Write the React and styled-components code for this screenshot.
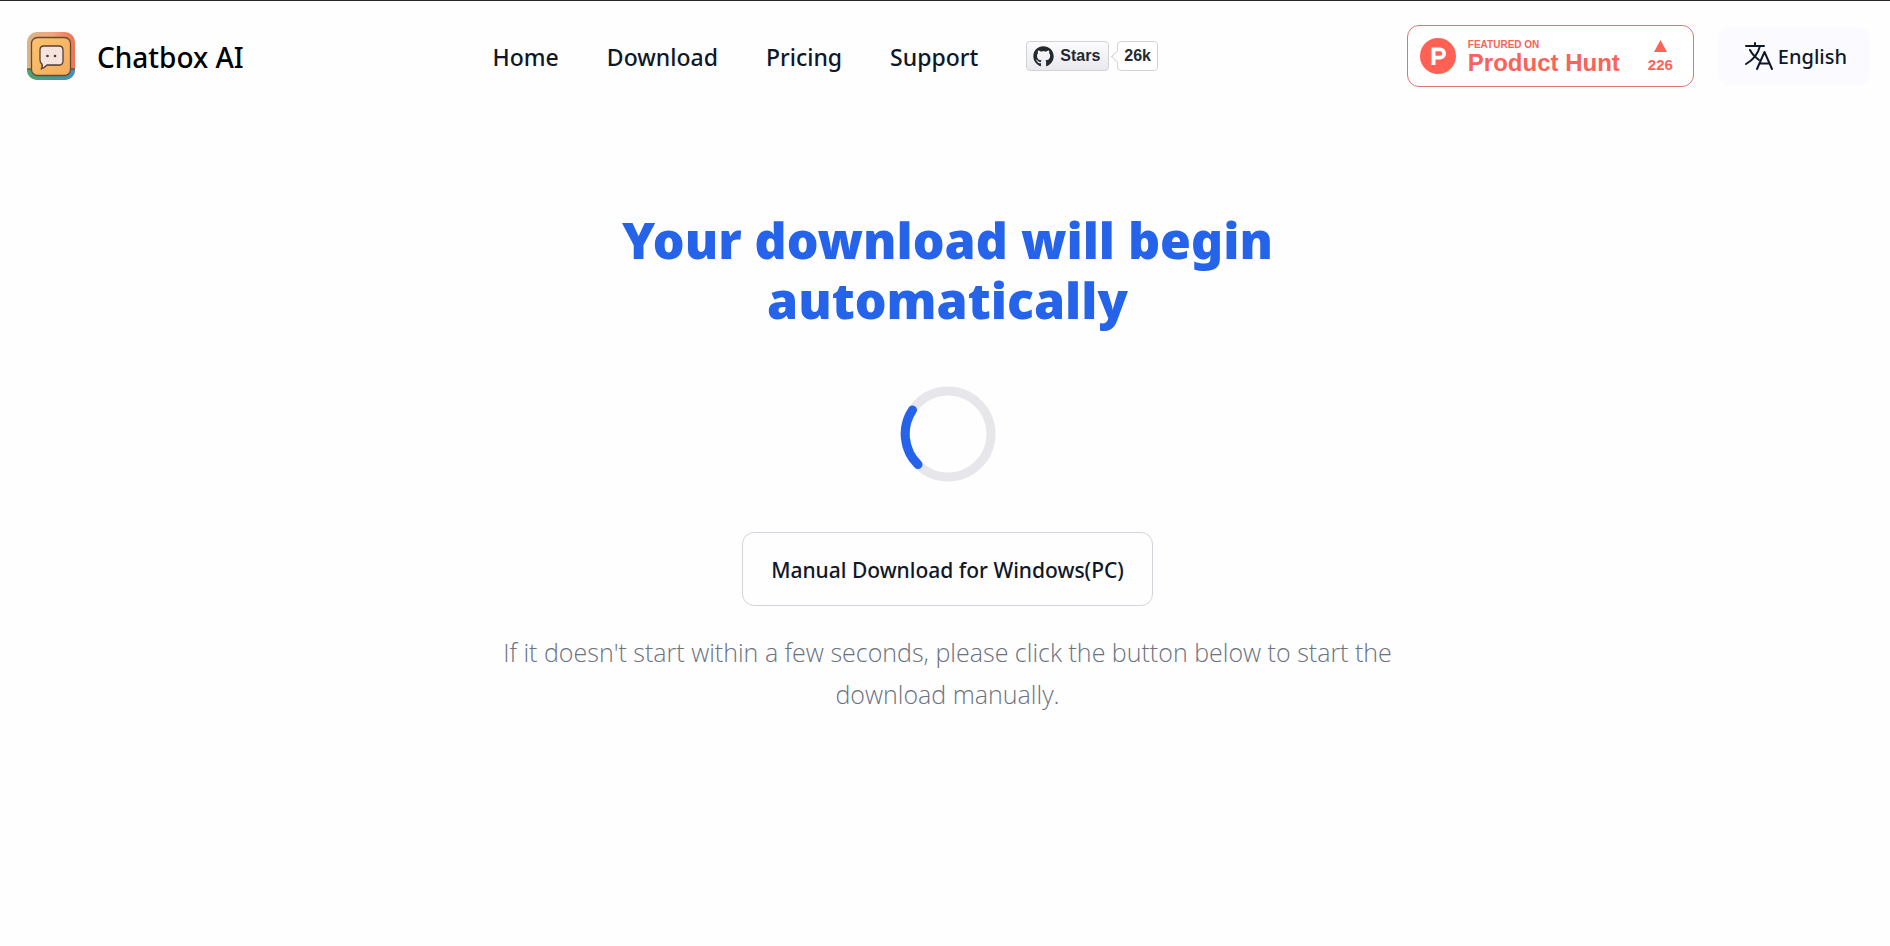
import React from 'react';
import styled, { createGlobalStyle } from 'styled-components';
import { FaGithub } from 'react-icons/fa';

const NAV_LINKS = ['Home', 'Download', 'Pricing', 'Support'];

const Logo = () => (
  <svg width="48" height="48" viewBox="0 0 48 48" aria-hidden="true">
    <defs>
      <linearGradient id="frame" x1="0" y1="0" x2="1" y2="0">
        <stop offset="0" stopColor="#d9b587" />
        <stop offset="0.5" stopColor="#f0a878" />
        <stop offset="1" stopColor="#ee7355" />
      </linearGradient>
      <linearGradient id="base" x1="0" y1="0" x2="1" y2="0">
        <stop offset="0" stopColor="#4fa36b" />
        <stop offset="0.6" stopColor="#3f9c93" />
        <stop offset="1" stopColor="#3a92c8" />
      </linearGradient>
      <linearGradient id="face" x1="0" y1="0" x2="1" y2="1">
        <stop offset="0" stopColor="#fcc36d" />
        <stop offset="1" stopColor="#f1ad5c" />
      </linearGradient>
    </defs>
    <rect width="48" height="48" rx="10" fill="url(#frame)" />
    <path d="M0 37h48v1a10 10 0 0 1-10 10H10A10 10 0 0 1 0 38z" fill="url(#base)" />
    <path d="M0 37h5M43 37h5" stroke="#5a3b30" />
    <rect x="4.500" y="5.500" width="39" height="38" rx="6" fill="url(#face)" stroke="#6a4838" strokeWidth="1.300" />
    <path d="M17 16h15q4 0 4 4v10q0 4-4 4H20q-3 3-7 4 2-2 1-6-1-1-1-3v-9q0-4 4-4z" fill="#8b5a3c" opacity="0.6" />
    <path d="M17 14h15q4 0 4 4v11q0 4-4 4H20q-3 3-6 4 2-2 1-5-2-1-2-4V18q0-4 4-4z" fill="#f5e4de" stroke="#5a4038" strokeWidth="1.300" />
    <circle cx="20.500" cy="24" r="1.300" fill="#4a3530" />
    <circle cx="28" cy="24" r="1.300" fill="#4a3530" />
  </svg>
);

const HuntIcon = () => (
  <svg width="36" height="36" viewBox="0 0 36 36" aria-hidden="true">
    <circle cx="18" cy="18" r="18" fill="#ff6154" />
    <path d="M11.500 9.500h8.500a6 6 0 0 1 0 12h-4.500V27h-4zM15.500 13.200v4.600H20a2.300 2.300 0 0 0 0-4.600z"
      fill="#fff" fillRule="evenodd" />
  </svg>
);

const TranslateIcon = () => (
  <svg width="30" height="30" viewBox="0 0 30 30" fill="none" stroke="currentColor"
    strokeWidth="2" strokeLinecap="round" strokeLinejoin="round" aria-hidden="true">
    <path d="M2 5h18M11 2v3M16 5C14 13 9 19 2 23M6 9c2 4 5 7 9 10" />
    <path d="M13 28l7.500-17L28 28M15.500 22.500h10" />
  </svg>
);

const Spinner = () => (
  <SpinnerSvg viewBox="0 0 96 96" role="img" aria-label="Preparing download">
    <circle cx="48" cy="48" r="43" stroke="#e7e6eb" />
    <path d="M12.500 24A43 43 0 0 0 18 78.500" stroke="#2563eb" />
  </SpinnerSvg>
);

const App = () => (
  <>
    <GlobalStyle />
    <Header>
      <Brand href="#">
        <Logo />
        <BrandName>Chatbox AI</BrandName>
      </Brand>

      <Nav>
        {NAV_LINKS.map((label) => (
          <NavLink key={label} href={`#${label.toLowerCase()}`}>{label}</NavLink>
        ))}
        <GithubLink href="#github">
          <StarButton>
            <FaGithub size={21} aria-hidden />
            Stars
          </StarButton>
          <StarCount>26k</StarCount>
        </GithubLink>
      </Nav>

      <Actions>
        <HuntBadge href="#product-hunt">
          <HuntIcon />
          <HuntText>
            <small>FEATURED ON</small>
            <strong>Product Hunt</strong>
          </HuntText>
          <Votes>
            <svg width="13" height="12" viewBox="0 0 13 12" aria-hidden="true">
              <path d="M6.500 0L13 12H0z" fill="currentColor" />
            </svg>
            226
          </Votes>
        </HuntBadge>
        <LanguageButton type="button">
          <TranslateIcon />
          English
        </LanguageButton>
      </Actions>
    </Header>

    <Main>
      <Title>Your download will begin automatically</Title>
      <Spinner />
      <DownloadButton type="button">Manual Download for Windows(PC)</DownloadButton>
      <Hint>
        If it doesn't start within a few seconds, please click the button below to start the
        download manually.
      </Hint>
    </Main>
  </>
);

const GlobalStyle = createGlobalStyle`
  * { box-sizing: border-box; }

  body {
    margin: 0;
    border-top: 1px solid #2a262c;
    background: #fefefe;
    color: #0f172a;
    font-family: "Noto Sans", "Open Sans", sans-serif;
  }

  a { color: inherit; text-decoration: none; }
  button { font-family: inherit; color: inherit; cursor: pointer; }
`;

const Header = styled.header`
  display: flex;
  align-items: center;
  justify-content: space-between;
  padding: 24px 20px 24px 27px;
`;

const Brand = styled.a`
  display: flex;
  align-items: center;
  gap: 22px;
`;

const BrandName = styled.span`
  padding-top: 2px;
  color: #000;
  font-size: 28px;
  font-weight: 500;
  line-height: 36px;
`;

const Nav = styled.nav`
  display: flex;
  align-items: center;
  gap: 48px;
`;

const NavLink = styled.a`
  padding-top: 2px;
  font-size: 23px;
  font-weight: 500;
  line-height: 32px;
`;

const GithubLink = styled.a`
  display: flex;
  gap: 8px;
  color: #24292f;
  font-family: "Liberation Sans", Arial, sans-serif;
  font-size: 16px;
  font-weight: 700;
  line-height: 28px;
`;

const StarButton = styled.span`
  display: flex;
  align-items: center;
  gap: 6px;
  padding: 0 8px 0 6px;
  border: 1px solid #d3d1d8;
  border-radius: 4px;
  background: linear-gradient(#fcfcfd, #e9e8ee);
`;

const StarCount = styled.span`
  position: relative;
  padding: 0 6px;
  border: 1px solid #d3d1d8;
  border-radius: 4px;
  background: #fff;

  &::before {
    content: '';
    position: absolute;
    left: -5px;
    top: 10px;
    width: 8px;
    height: 8px;
    border: solid #d3d1d8;
    border-width: 0 0 1px 1px;
    background: #fff;
    transform: rotate(45deg);
  }
`;

const Actions = styled.div`
  display: flex;
  align-items: center;
  gap: 24px;
`;

const HuntBadge = styled.a`
  display: flex;
  align-items: center;
  height: 62px;
  padding: 0 20px 0 12px;
  border: 1px solid #dd7672;
  border-radius: 12px;
  background: #fff;
  color: #f9635a;
  font-family: "Liberation Sans", Arial, sans-serif;
  font-weight: 700;
`;

const HuntText = styled.span`
  display: flex;
  flex-direction: column;
  margin: 2px 28px 0 12px;

  small { font-size: 10px; line-height: 12px; }
  strong { font-size: 24px; line-height: 24px; }
`;

const Votes = styled.span`
  display: flex;
  flex-direction: column;
  align-items: center;
  gap: 5px;
  font-size: 15px;
  line-height: 16px;
`;

const LanguageButton = styled.button`
  display: flex;
  align-items: center;
  gap: 4px;
  height: 58px;
  padding: 0 23px 0 26px;
  border: 0;
  border-radius: 12px;
  background: #fafaff;
  font-size: 20px;
  font-weight: 500;
`;

const Main = styled.main`
  display: flex;
  flex-direction: column;
  align-items: center;
  padding: 99px 16px 48px 21px;
  text-align: center;
`;

const Title = styled.h1`
  max-width: 900px;
  margin: 0 0 56px;
  color: #2563eb;
  font-size: 50px;
  font-weight: 900;
  line-height: 60px;
`;

const SpinnerSvg = styled.svg`
  width: 96px;
  height: 96px;
  margin-bottom: 50px;
  fill: none;
  stroke-width: 9;
  stroke-linecap: round;
`;

const DownloadButton = styled.button`
  margin-bottom: 25px;
  padding: 21px 28px 19px;
  border: 1px solid #d4d3db;
  border-radius: 12px;
  background: transparent;
  font-size: 21px;
  font-weight: 500;
  line-height: 32px;
`;

const Hint = styled.p`
  max-width: 920px;
  margin: 0;
  color: #6b7280;
  font-family: "Open Sans", "Noto Sans", sans-serif;
  font-size: 25px;
  font-weight: 300;
  line-height: 42px;
`;

export default App;
